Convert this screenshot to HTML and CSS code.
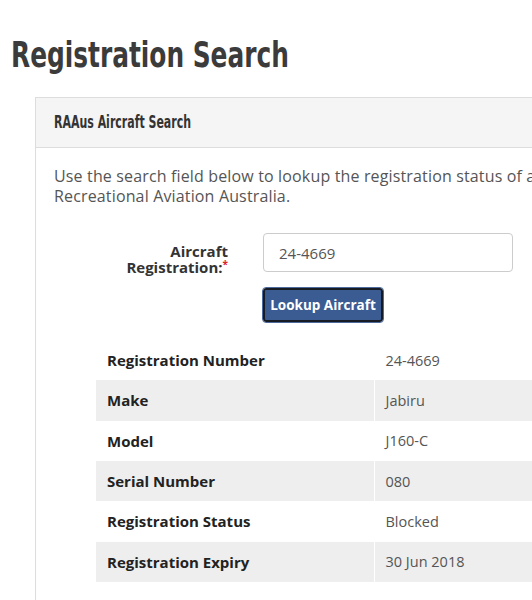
FILE: index.html
```html
<!DOCTYPE html>
<html>
<head>
<meta charset="utf-8">
<link rel="stylesheet" href="styles.css">
</head>
<body>
<h1 class="page-title"><span class="cond">Registration Search</span></h1>
<div class="panel">
  <div class="panel-heading"><span class="cond">RAAus Aircraft Search</span></div>
  <div class="panel-body">
    <p class="intro">Use the search field below to lookup the registration status of an aircraft registered with<br>Recreational Aviation Australia.</p>
    <form class="search-form">
      <label class="field-label" for="reg">Aircraft Registration:<span class="req">*</span></label>
      <input class="field-input" id="reg" type="text" value="24-4669">
      <div class="btn-cell"><button type="button" class="btn-lookup">Lookup Aircraft</button></div>
    </form>
    <table class="results">
      <tr><th>Registration Number</th><td>24-4669</td></tr>
      <tr class="alt"><th>Make</th><td>Jabiru</td></tr>
      <tr><th>Model</th><td>J160-C</td></tr>
      <tr class="alt"><th>Serial Number</th><td>080</td></tr>
      <tr><th>Registration Status</th><td>Blocked</td></tr>
      <tr class="alt"><th>Registration Expiry</th><td>30 Jun 2018</td></tr>
    </table>
  </div>
</div>
</body>
</html>
```
FILE: styles.css
```css
html, body {
  margin: 0;
  padding: 0;
  background: #fff;
  overflow: hidden;
}
body {
  font-family: "Open Sans", "Liberation Sans", sans-serif;
  color: #555;
  width: 900px;
}
.cond {
  display: inline-block;
  transform-origin: left center;
  white-space: nowrap;
}
.page-title {
  margin: 0;
  padding: 33px 0 0 11px;
  font-family: "DejaVu Sans", sans-serif;
  font-weight: bold;
  font-size: 36px;
  line-height: 44px;
  color: #3b3b3b;
}
.page-title .cond {
  transform: scaleX(0.69);
}
.panel {
  margin: 20px 0 0 35px;
  width: 800px;
  border: 1px solid #ddd;
  border-right: none;
  height: 520px;
}
.panel-heading {
  background: #f5f5f5;
  border-bottom: 1px solid #ddd;
  height: 50px;
  box-sizing: border-box;
  padding: 13px 0 0 18px;
  font-family: "DejaVu Sans", sans-serif;
  font-weight: bold;
  font-size: 18px;
  line-height: 22px;
  color: #333;
}
.panel-heading .cond {
  transform: scaleX(0.61);
}
.panel-body {
  padding: 18px 0 0 18px;
}
.intro {
  margin: 0;
  font-size: 16px;
  line-height: 20px;
  letter-spacing: 0.15px;
  color: #555;
  white-space: nowrap;
}
.search-form {
  display: grid;
  grid-template-columns: 174px 250px;
  grid-template-rows: 39px auto;
  column-gap: 35px;
  row-gap: 15px;
  margin-top: 27px;
}
.field-label {
  text-align: right;
  font-weight: bold;
  font-size: 15px;
  line-height: 16px;
  color: #333;
  padding-top: 10px;
  padding-left: 56px;
}
.req {
  color: #d9262c;
  font-size: 10px;
  vertical-align: top;
  line-height: 10px;
}
.field-input {
  box-sizing: border-box;
  width: 250px;
  height: 39px;
  border: 1px solid #ccc;
  border-radius: 4px;
  padding: 0 15px;
  font-family: "Open Sans", "Liberation Sans", sans-serif;
  font-size: 15px;
  color: #555;
}
.btn-cell {
  grid-column: 2;
}
.btn-lookup {
  box-sizing: border-box;
  width: 120px;
  height: 34px;
  margin-top: 1px;
  background: #3a5c93;
  color: #fff;
  border: 2px solid #161b24;
  border-radius: 3px;
  outline: 1px solid #4c6b9c;
  font-family: "Open Sans", "Liberation Sans", sans-serif;
  font-weight: bold;
  font-size: 13.5px;
  padding: 0;
}
.results {
  margin: 18px 0 0 42px;
  border-collapse: collapse;
  width: 560px;
}
.results th, .results td {
  height: 40.33px;
  padding: 0 11px;
  text-align: left;
  font-size: 15px;
  box-sizing: border-box;
}
.results th {
  width: 278px;
  font-weight: bold;
  color: #222;
}
.results td {
  color: #555;
  font-size: 14.5px;
  border-left: 1px solid #fff;
}
.results tr.alt th, .results tr.alt td {
  background: #eeeeee;
}
```
